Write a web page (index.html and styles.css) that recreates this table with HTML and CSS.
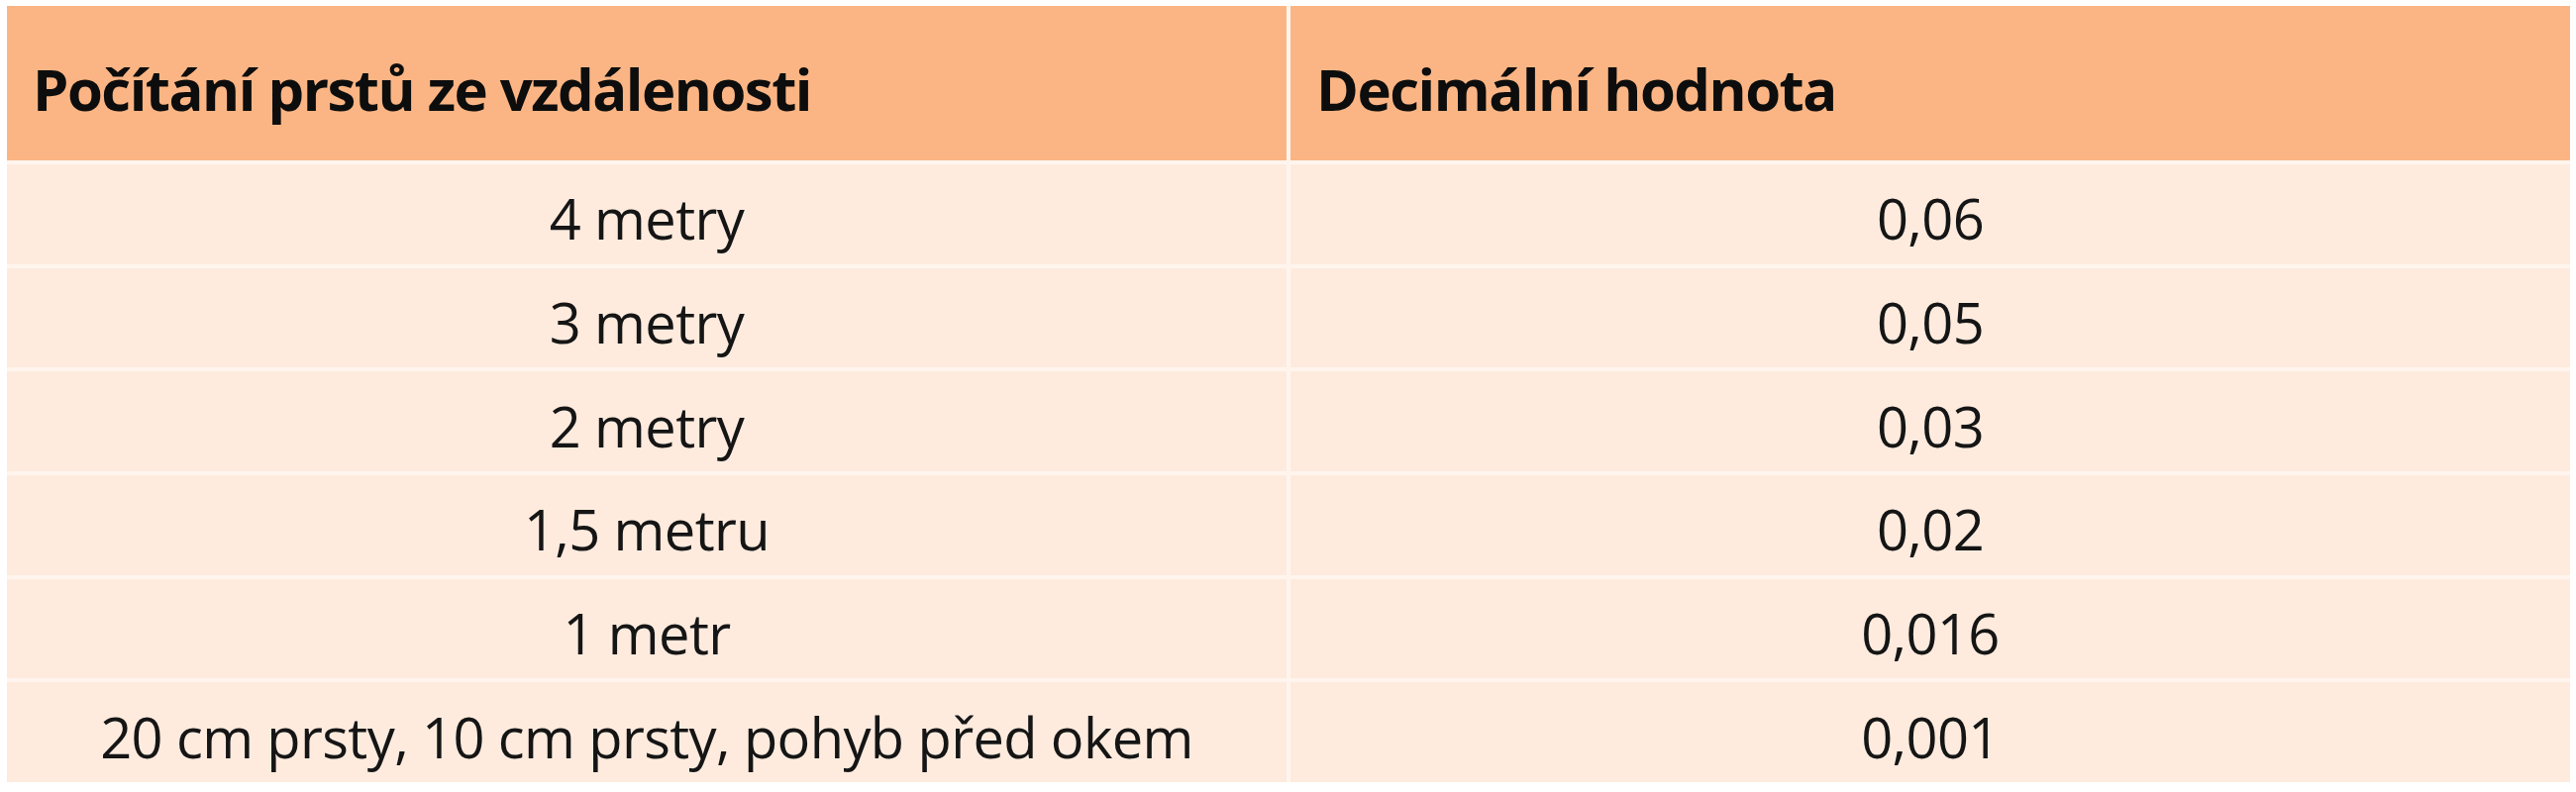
FILE: index.html
```html
<!DOCTYPE html>
<html lang="cs">
<head>
<meta charset="utf-8">
<title>Počítání prstů ze vzdálenosti</title>
<link rel="stylesheet" href="styles.css">
</head>
<body>
<div class="page">
  <div class="table">
    <div class="cell head">Počítání prstů ze vzdálenosti</div>
    <div class="cell head">Decimální hodnota</div>
    <div class="cell">4 metry</div>
    <div class="cell">0,06</div>
    <div class="cell">3 metry</div>
    <div class="cell">0,05</div>
    <div class="cell">2 metry</div>
    <div class="cell">0,03</div>
    <div class="cell">1,5 metru</div>
    <div class="cell">0,02</div>
    <div class="cell">1 metr</div>
    <div class="cell">0,016</div>
    <div class="cell">20 cm prsty, 10 cm prsty, pohyb před okem</div>
    <div class="cell">0,001</div>
  </div>
</div>
</body>
</html>
```
FILE: styles.css
```css
html, body {
  margin: 0;
  padding: 0;
  background: #ffffff;
}

.page {
  padding: 6px 6px 0 7px;
  width: 2588px;
}

.table {
  display: grid;
  grid-template-columns: 1fr 1fr;
  grid-template-rows: 156px repeat(6, 1fr);
  column-gap: 4px;
  row-gap: 4px;
  height: 784px;
  background: #fff5ee;
  font-family: "Open Sans", "Noto Sans", sans-serif;
  color: #151515;
}

.cell {
  background: #feebde;
  display: flex;
  align-items: center;
  justify-content: center;
  font-size: 56px;
  letter-spacing: -0.6px;
  padding-top: 8px;
  box-sizing: border-box;
}

.cell.head {
  background: #fbb584;
  justify-content: flex-start;
  padding-left: 26px;
  padding-top: 10px;
  font-weight: 700;
  font-size: 58px;
  letter-spacing: -1.5px;
  color: #0d0d0d;
}
```
